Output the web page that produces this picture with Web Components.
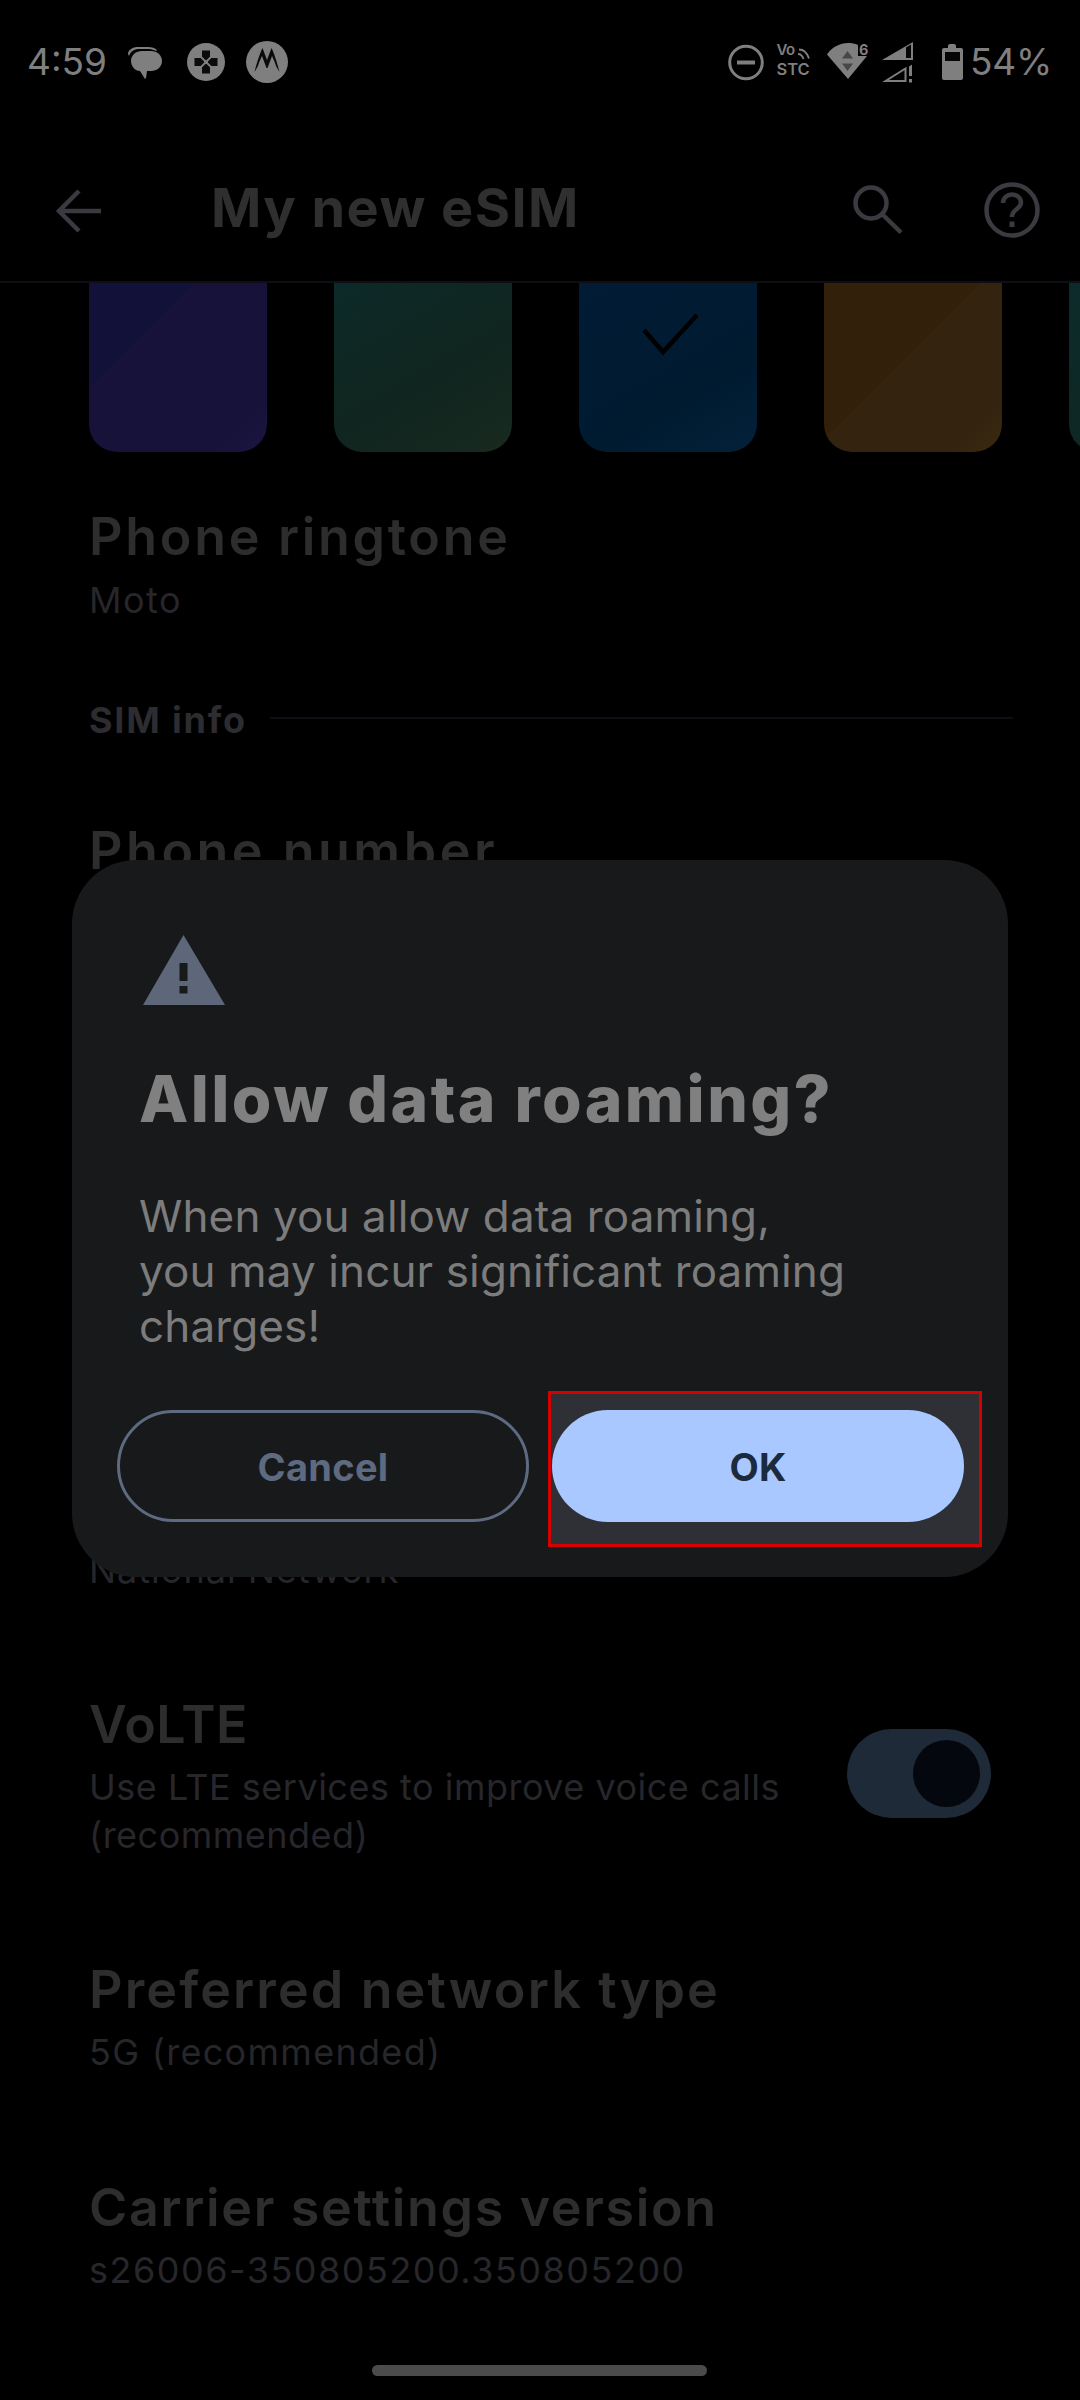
<!doctype html>
<html lang="en"><head><meta charset="utf-8"><title>My new eSIM</title>
<style>html,body{margin:0;background:#000}</style></head>
<body>
<x-screen>
  <x-status></x-status>
  <x-appbar>My new eSIM</x-appbar>
  <x-swatches></x-swatches>
  <x-list>
    <x-pref style="--gap:5px;--tls:2.700px;--sls:1.500px"><span slot="title">Phone ringtone</span>Moto</x-pref>
    <x-section style="margin-top:72px">SIM info</x-section>
    <x-pref style="margin-top:73px;--tls:3.500px"><span slot="title">Phone number</span></x-pref>
    <x-pref compact style="margin-top:657px;--sls:1px">National Network</x-pref>
    <x-pref style="margin-top:97px;--tls:.4px;--sls:.5px"><span slot="title">VoLTE</span>Use LTE services to improve voice calls (recommended)<x-switch slot="action"></x-switch></x-pref>
    <x-pref style="margin-top:97px;--tls:2.120px;--sls:1.300px"><span slot="title">Preferred network type</span>5G (recommended)</x-pref>
    <x-pref style="margin-top:98px;--tls:1.650px;--sls:1.500px"><span slot="title">Carrier settings version</span>s26006-350805200.350805200</x-pref>
  </x-list>
  <x-home></x-home>
  <x-dialog slot="overlay">
    <span slot="title">Allow data roaming?</span>
    <span slot="body">When you allow data roaming,<br>you may incur significant roaming charges!</span>
    <x-button slot="actions">Cancel</x-button>
    <x-highlight slot="actions"><x-button primary>OK</x-button></x-highlight>
  </x-dialog>
</x-screen>
<script>
const def=(name,html)=>customElements.define(name,class extends HTMLElement{
  constructor(){super();this.attachShadow({mode:'open'}).innerHTML=html;}
});
def('x-screen',`<style>:host{display:block;position:relative;width:1080px;height:2400px;overflow:hidden;background:#000;font-family:Inter,"Noto Sans",sans-serif}
</style><slot></slot><slot name="overlay"></slot>`);
def('x-status',`<style>:host{display:flex;align-items:flex-start;justify-content:space-between;height:52px;padding:40px 28px 0 27px;color:#7f7f7f;font-size:37px;line-height:44px;font-weight:400}
.g{display:flex;align-items:flex-start}.time{width:83px;margin-right:15px}.pct{width:82px;letter-spacing:-.2px}svg{display:block;height:44px}
text{font-family:Inter,sans-serif;fill:#7f7f7f}</style>
<div class="g"><span class="time">4:59</span>
<svg width="170" viewBox="125 40 170 44">
<path d="M128 54c0-4 5-7 9-7h11c4 0 7 1 9 3l-1 1c-2-1-4-2-7-2h-10c-5 0-8 2-10 7z" fill="#7f7f7f"/>
<path d="M131 61c0-6 5-10 11-10h9c6 0 11 4 11 10s-5 10-11 10h-4l-1 7-1 1-5-8c-5 0-9-5-9-10z" fill="#7f7f7f"/>
<circle cx="206" cy="62" r="19" fill="#7f7f7f"/>
<path d="M202 50.500h8V58h7.500v8H210v7.500h-8V66h-7.500v-8h7.500z" fill="#0b0b0d"/>
<path d="M200.500 56.500l11 11m0-11l-11 11" stroke="#7f7f7f" stroke-width="1.800"/><circle cx="206" cy="62" r="2" fill="#7f7f7f"/>
<circle cx="267" cy="62" r="21" fill="#7f7f7f"/>
<path d="M254.500 72C257 62 260 53 262.500 48L267 60l4.500-12C274 53 277 62 279.500 72l-3.500-6c-1.500-5-3-8-4-10l-4.500 12h-1L262 56c-1 2-2.500 5-4 10z" fill="#0b0b0d"/>
</svg></div>
<div class="g">
<svg width="245" viewBox="725 40 245 44">
<circle cx="746" cy="62.500" r="16.300" fill="none" stroke="#7f7f7f" stroke-width="3"/><rect x="737" y="60.500" width="18" height="4" fill="#7f7f7f"/>
<text x="776.500" y="55" font-size="15" font-weight="600" letter-spacing="-.6">Vo</text><text x="776.500" y="75" font-size="16.500" font-weight="600">STC</text>
<path d="M799 49.500c4 0 8 3 10 9M798 54c2.500 0 4.500 2 5.500 5" fill="none" stroke="#7f7f7f" stroke-width="1.800"/>
<path d="M827 54.500C832 47 840 43 848 43c3.500 0 7 .6 10 2v11h9L848 79z" fill="#7f7f7f"/>
<path d="M847.500 51l5.500 7.500h-11zM847.500 71l5.500-7.500h-11z" fill="#47474a"/>
<text x="859" y="55" font-size="14.500" font-weight="700">6</text>
<path d="M882 60l31-18v18z" fill="#7f7f7f"/><path d="M906 47.500l5-3v13.500h-5z" fill="#050505"/>
<path d="M885.500 81l20-12.500V81z" fill="none" stroke="#7f7f7f" stroke-width="2"/><path d="M909 66.500l3-2V76h-3zM909 79h3v3.500h-3z" fill="#7f7f7f"/>
<path d="M948 46c0-1 .5-2 2-2h4c1.500 0 2 1 2 2v2h5c1.200 0 2 .8 2 2v28c0 1.200-.8 2-2 2h-17c-1.200 0-2-.8-2-2V50c0-1.200.8-2 2-2h4z" fill="#7f7f7f"/>
<rect x="945" y="52" width="15" height="9" fill="#050505"/>
</svg><span class="pct">54%</span></div>`);
def('x-appbar',`<style>:host{display:flex;box-sizing:border-box;height:191px;padding:0 36px 41px 50px;align-items:flex-end;border-bottom:2px solid #0e0e14;color:#2f2f2f}
svg{display:block;height:64px;fill:none;stroke:#3a3a40;stroke-width:4.500}
.t{margin-left:101px;font-size:54px;line-height:64px;font-weight:700;letter-spacing:1.450px;flex:1}</style>
<svg width="60" viewBox="50 176 60 64"><path d="M101 211H60M79 191l-20 20 20 20"/></svg>
<span class="t"><slot></slot></span>
<svg width="69" viewBox="843 176 69 64"><circle cx="871" cy="203" r="15.500"/><path d="M882 214l19 18.500"/></svg>
<svg width="63" style="margin-left:69px" viewBox="981 176 63 64"><circle cx="1012" cy="210" r="25.500"/><path d="M1003 203c0-5 4-8.500 9-8.500s9 3.500 9 8c0 6.500-9 6.500-9 14.500" /><path d="M1012 221.500v5.500" stroke-width="5"/></svg>`);
def('x-swatches',`<style>:host{display:flex;gap:67px;height:169px;padding-left:89px;overflow:hidden}
i{display:block;flex:none;width:178px;height:169px;border-radius:0 0 28px 28px;position:relative}
svg{position:absolute;left:50px;top:30px}</style>
<i style="background:linear-gradient(135deg,#12113a 0 30%,#17123a 30% 85%,#1b1640)"></i>
<i style="background:linear-gradient(150deg,#0c2a28,#10251f 55%,#15281f 85%,#1a2a20)"></i>
<i style="background:linear-gradient(150deg,#031b36,#001b30 65%,#04213a)"><svg width="80" height="50" viewBox="0 0 80 50"><path d="M15 17l19 22L68 2" fill="none" stroke="#000" stroke-width="4.500"/></svg></i>
<i style="background:linear-gradient(135deg,#33200b 0 45%,#34240f 45% 85%,#3a2a13)"></i>
<i style="background:linear-gradient(150deg,#0b2b2a,#10251f)"></i>`);
def('x-list',`<style>:host{display:block;margin-top:51px}</style><slot></slot>`);
def('x-pref',`<style>:host{display:flex;padding:0 89px}
.m{flex:1;display:flex;flex-direction:column;gap:var(--gap,4px);min-width:0}
.t{font-size:52px;line-height:68px;font-weight:600;color:#2d2d2d;letter-spacing:var(--tls,0)}
.s{font-size:36px;line-height:48px;color:#26262b;letter-spacing:var(--sls,0)}
:host([compact]) .t{display:none}
.a{flex:none;margin-top:38px}</style>
<div class="m"><div class="t"><slot name="title"></slot></div><div class="s"><slot></slot></div></div>
<div class="a"><slot name="action"></slot></div>`);
def('x-section',`<style>:host{display:flex;align-items:center;gap:23px;padding:0 67px 0 89px;font-size:36px;line-height:48px;font-weight:700;letter-spacing:1.800px;color:#2c2c31}
b{flex:1;height:2px;background:#0e0e14;margin-top:-4px}</style><span><slot></slot></span><b></b>`);
def('x-switch',`<style>:host{display:flex;align-items:center;justify-content:flex-end;box-sizing:border-box;width:144px;height:89px;padding-right:11px;border-radius:45px;background:#1e2a38}
i{width:67px;height:67px;border-radius:50%;background:#05070f}</style><i></i>`);
def('x-home',`<style>:host{display:block;width:335px;height:11px;margin:71px 0 0 372px;border-radius:6px;background:#4b4b4b}</style>`);
def('x-dialog',`<style>:host{position:absolute;left:72px;top:860px;width:936px;height:717px;box-sizing:border-box;padding:70px 44px 0 45px;border-radius:64px;background:#18191b;display:flex;flex-direction:column}
svg{display:block;margin-left:22px}
.t{margin:49px 0 0 22px;font-size:64px;line-height:80px;font-weight:800;letter-spacing:2.450px;color:#808080}
.b{margin:50px 0 0 22px;width:730px;font-size:44px;line-height:55px;letter-spacing:.12px;color:#7c7c7c}
.a{display:grid;grid-template-columns:1fr 1fr;gap:23px;margin-top:56px}</style>
<svg width="90" height="80" viewBox="139 930 90 80"><path d="M183.500 935L225 1005H143z" fill="#5e6779"/><path d="M179.500 963h8v18h-8zM179.500 986h8v7.500h-8z" fill="#18191b"/></svg>
<div class="t"><slot name="title"></slot></div><div class="b"><slot name="body"></slot></div>
<div class="a"><slot name="actions"></slot></div>`);
def('x-button',`<style>:host{display:flex;align-items:center;justify-content:center;box-sizing:border-box;height:112px;padding-top:2px;border-radius:56px;border:3px solid #5d6a80;color:#5d6a80;font-size:38px;font-weight:700;letter-spacing:.3px;position:relative}
:host([primary]){border:0;background:#a8c8ff;color:#1b2a3c}</style><slot></slot>`);
def('x-highlight',`<style>:host{display:block;position:relative}
.box{position:absolute;left:-4px;right:-18px;top:-19px;bottom:-25px;box-sizing:border-box;border:3px solid #d60000;background:#2f3036}</style>
<div class="box"></div><slot></slot>`);
</script>
</body></html>
